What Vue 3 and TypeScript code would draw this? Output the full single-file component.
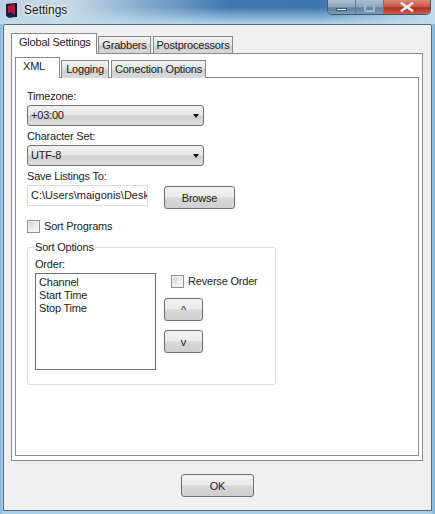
<script setup lang="ts">
const outerTabs = ['Global Settings', 'Grabbers', 'Postprocessors']
const innerTabs = ['XML', 'Logging', 'Conection Options']
const sortFields = ['Channel', 'Start Time', 'Stop Time']
</script>

<template>
  <div class="window">
    <header class="titlebar">
      <svg class="app-icon" viewBox="0 0 12 15" aria-hidden="true">
        <path d="M1 1 10 0V14L4 15 1 13Z" fill="#1b1f4e" />
        <path d="M3 3 10 1V12L6 9 3 10Z" fill="#b5163a" />
        <path d="M10 0h2v14h-2Z" fill="#0c0d22" />
      </svg>
      <span class="title">Settings</span>
      <div class="controls">
        <span class="ctl ctl-min"><i class="min-glyph"></i></span>
        <span class="ctl ctl-max"><i class="max-glyph"></i></span>
        <span class="ctl ctl-close">
          <svg viewBox="0 0 14 10" width="14" height="10" aria-hidden="true">
            <path d="M2 0 7 3.4 12 0 14 1.2 9.6 5 14 8.8 12 10 7 6.6 2 10 0 8.8 4.4 5 0 1.2Z" fill="#f4eeee" />
          </svg>
        </span>
      </div>
    </header>

    <main class="client">
      <nav class="tabs tabs-outer">
        <span v-for="(t, i) in outerTabs" :key="t" :class="['tab', { active: i === 0 }]">{{ t }}</span>
      </nav>
      <section class="outer-panel">
        <nav class="tabs tabs-inner">
          <span v-for="(t, i) in innerTabs" :key="t" :class="['tab', { active: i === 0 }]">{{ t }}</span>
        </nav>
        <div class="page">
          <div class="label">Timezone:</div>
          <div class="select">+03:00<i class="arrow"></i></div>
          <div class="label next">Character Set:</div>
          <div class="select">UTF-8<i class="arrow"></i></div>
          <div class="label next">Save Listings To:</div>
          <div class="path-row">
            <div class="input"><span>C:\Users\maigonis\Desktop</span></div>
            <button class="btn browse">Browse</button>
          </div>
          <label class="check sort-check"><i class="box"></i>Sort Programs</label>

          <fieldset class="group">
            <legend>Sort Options</legend>
            <div class="label">Order:</div>
            <div class="group-row">
              <ul class="list">
                <li v-for="f in sortFields" :key="f">{{ f }}</li>
              </ul>
              <div class="side">
                <label class="check reverse"><i class="box"></i>Reverse Order</label>
                <button class="btn move up">^</button>
                <button class="btn move down">v</button>
              </div>
            </div>
          </fieldset>
        </div>
      </section>
      <footer class="footer">
        <button class="btn ok">OK</button>
      </footer>
    </main>
  </div>
</template>

<style>
html,
body {
  margin: 0;
  background: #6f9cc0;
}
</style>

<style scoped>
.window {
  width: 435px;
  height: 514px;
  display: flex;
  flex-direction: column;
  overflow: hidden;
  box-sizing: border-box;
  font-family: "Liberation Sans", Arial, sans-serif;
  font-size: 11px;
  letter-spacing: -0.2px;
  color: #222;
  background:
    linear-gradient(90deg, #7fb4d8 0, #a9d0e6 3px, #a9d0e6 431px, #7fb0d0 435px);
}

.titlebar {
  height: 24px;
  flex: none;
  display: flex;
  align-items: flex-start;
  padding-left: 5px;
  box-sizing: border-box;
  background:
    linear-gradient(180deg, rgba(255, 255, 255, 0) 30%, rgba(190, 220, 238, 0.9) 100%),
    linear-gradient(90deg, #bcd0e0 0, #c8d8e4 70px, #7ea6cb 150px, #3f78b0 230px, #3c76ae 320px, #9cc0dc 400px, #c4dcec 435px);
}

.app-icon {
  width: 12px;
  height: 15px;
  margin-top: 3px;
  flex: none;
}

.title {
  margin: 3px 0 0 7px;
  font-size: 12px;
  letter-spacing: 0;
  line-height: 15px;
  color: #161616;
  text-shadow: 0 0 5px #fff, 0 0 3px #fff;
}

.controls {
  margin-left: auto;
  margin-right: 4px;
  display: flex;
  height: 15px;
  border: 1px solid #44586c;
  border-top: 0;
  border-radius: 0 0 5px 5px;
  overflow: hidden;
  box-sizing: border-box;
}

.ctl {
  display: flex;
  align-items: center;
  justify-content: center;
}

.ctl-min,
.ctl-max {
  width: 27px;
  border-right: 1px solid #5e7f9c;
  background: linear-gradient(180deg, #a9bdd0 0, #8ba5be 50%, #5f7f9e 55%, #7d9cb8 100%);
}

.ctl-close {
  width: 46px;
  background: linear-gradient(180deg, #dc8a7c 0, #c9523f 50%, #b02d1c 55%, #cf5a48 100%);
}

.min-glyph {
  display: block;
  width: 11px;
  height: 3px;
  margin-top: 5px;
  background: #f4f6f8;
  border: 1px solid #44586c;
  box-sizing: border-box;
}

.max-glyph {
  display: block;
  width: 11px;
  height: 9px;
  border: 2px solid #a6b8c8;
  box-sizing: border-box;
}

.client {
  flex: 1;
  margin: 0 3px 3px 3px;
  padding: 8px 7px 0;
  background: #f0f0f0;
  border: 1px solid #4e6a82;
  border-radius: 2px 2px 0 0;
  box-sizing: border-box;
  display: flex;
  flex-direction: column;
  align-items: flex-start;
  min-height: 0;
}

.tabs {
  display: flex;
  align-items: flex-end;
  gap: 1px;
  height: 21px;
  margin-bottom: -1px;
}

.tab {
  height: 18px;
  box-sizing: border-box;
  line-height: 16px;
  text-align: center;
  border: 1px solid #8a8a8a;
  border-bottom: 0;
  background: linear-gradient(180deg, #f2f2f2 0, #e4e4e4 45%, #cfcfcf 55%, #d9d9d9 100%);
  white-space: nowrap;
}

.tab.active {
  height: 21px;
  padding-left: 7px;
  line-height: 17px;
  text-align: left;
  background: #fff;
  position: relative;
  z-index: 1;
}

.tabs-outer .tab:nth-child(1) {
  width: 86px;
}

.tabs-outer .tab:nth-child(2) {
  width: 53px;
}

.tabs-outer .tab:nth-child(3) {
  width: 80px;
  margin-left: 1px;
}

.tabs-inner .tab:nth-child(1) {
  width: 45px;
}

.tabs-inner .tab:nth-child(2) {
  width: 48px;
}

.tabs-inner .tab:nth-child(3) {
  width: 95px;
  margin-left: 1px;
}

.outer-panel {
  width: 412px;
  height: 408px;
  flex: none;
  padding: 3px;
  box-sizing: border-box;
  background: #fff;
  border: 1px solid #8a8a8a;
}

.page {
  height: 379px;
  padding: 11px;
  box-sizing: border-box;
  background: #fff;
  border: 1px solid #8a8a8a;
}

.label {
  line-height: 14px;
}

.label.next {
  margin-top: 3px;
}

.select {
  width: 177px;
  height: 21px;
  margin-top: 2px;
  padding-left: 3px;
  box-sizing: border-box;
  line-height: 19px;
  display: flex;
  justify-content: space-between;
  align-items: center;
  border: 1px solid #6f6f6f;
  border-radius: 3px;
  background: linear-gradient(180deg, #f2f2f2 0, #e6e6e6 45%, #cfcfcf 55%, #dcdcdc 100%);
}

.arrow {
  width: 0;
  height: 0;
  margin-right: 4px;
  border: 3.5px solid transparent;
  border-top: 4px solid #111;
  border-bottom: 0;
}

.path-row {
  display: flex;
  align-items: flex-start;
  margin-top: 2px;
}

.input {
  width: 121px;
  height: 21px;
  padding-left: 3px;
  box-sizing: border-box;
  line-height: 19px;
  letter-spacing: 0;
  border: 1px solid #d6dde4;
  background: #fff;
  overflow: hidden;
  white-space: nowrap;
}

.btn {
  display: block;
  padding: 0;
  box-sizing: border-box;
  font: inherit;
  letter-spacing: inherit;
  color: inherit;
  border: 1px solid #707070;
  border-radius: 3px;
  background: linear-gradient(180deg, #f2f2f2 0, #ebebeb 45%, #d6d6d6 55%, #cfcfcf 100%);
}

.browse {
  width: 71px;
  height: 23px;
  margin: 1px 0 0 16px;
}

.check {
  display: flex;
  align-items: center;
  line-height: 13px;
}

.box {
  width: 13px;
  height: 13px;
  flex: none;
  margin-right: 4px;
  box-sizing: border-box;
  border: 1px solid #8e8f8f;
  background: linear-gradient(135deg, #cfcfcf 0, #eeeeee 60%, #f8f8f8 100%);
  box-shadow: inset 0 0 0 1px #f4f4f4;
}

.sort-check {
  margin-top: 11px;
}

.group {
  width: 249px;
  height: 145px;
  margin: 7px 0 0;
  padding: 3px 7px 0;
  box-sizing: border-box;
  min-width: 0;
  border: 1px solid #dcdcdc;
  border-radius: 3px;
}

.group legend {
  padding: 0;
  line-height: 14px;
}

.group-row {
  display: flex;
  margin-top: 2px;
}

.list {
  width: 121px;
  height: 97px;
  margin: 0;
  padding: 2px 3px;
  box-sizing: border-box;
  list-style: none;
  border: 1px solid #707070;
  background: #fff;
}

.list li {
  line-height: 13px;
}

.side {
  margin-left: 8px;
  display: flex;
  flex-direction: column;
  align-items: flex-start;
}

.reverse {
  margin: 2px 0 0 7px;
}

.move {
  width: 39px;
  height: 23px;
}

.up {
  margin-top: 10px;
}

.down {
  margin-top: 9px;
}

.footer {
  width: 100%;
  display: flex;
  justify-content: center;
  padding-top: 13px;
}

.ok {
  width: 73px;
  height: 23px;
}
</style>
